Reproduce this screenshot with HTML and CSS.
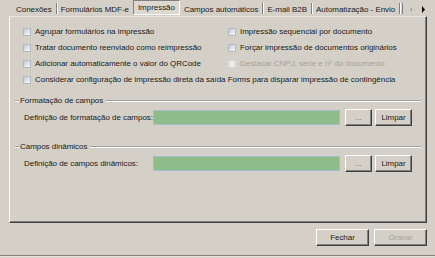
FILE: index.html
```html
<!DOCTYPE html>
<html>
<head>
<meta charset="utf-8">
<link rel="stylesheet" href="styles.css">
</head>
<body>
<div class="window">
  <div class="tabs">
    <span class="tab">Conexões</span><span class="sep"></span>
    <span class="tab">Formulários MDF-e</span>
    <span class="tab active">Impressão</span>
    <span class="tab after">Campos automáticos</span><span class="sep"></span>
    <span class="tab">E-mail B2B</span><span class="sep"></span>
    <span class="tab">Automatização - Envio</span><span class="sep"></span><span class="sep2"></span>
    <span class="scroll">
      <svg width="5" height="7" viewBox="0 0 5 7"><path d="M3 1 L1 3.5 L3 6 Z" fill="#a8a49c"/></svg>
      <svg width="5" height="7" viewBox="0 0 5 7"><path d="M1 0 L4 3.5 L1 7 Z" fill="#000"/></svg>
    </span>
  </div>
  <div class="panel">
    <div class="checks">
      <label class="chk"><span class="box"></span>Agrupar formulários na impressão</label>
      <label class="chk"><span class="box"></span>Impressão sequencial por documento</label>
      <label class="chk"><span class="box"></span>Tratar documento reenviado como reimpressão</label>
      <label class="chk"><span class="box"></span>Forçar impressão de documentos originários</label>
      <label class="chk"><span class="box"></span>Adicionar automaticamente o valor do QRCode</label>
      <label class="chk disabled"><span class="box"></span>Destacar CNPJ, série e nº do documento</label>
      <label class="chk wide"><span class="box"></span>Considerar configuração de impressão direta da saída Forms para disparar impressão de contingência</label>
    </div>
    <div class="group g1">
      <div class="ghead"><span class="tick"></span><span class="gtitle">Formatação de campos</span><span class="gline"></span></div>
      <div class="field">
        <span class="flabel">Definição de formatação de campos:</span>
        <span class="input"></span>
        <span class="btn dots">...</span>
        <span class="btn limpar">Limpar</span>
      </div>
    </div>
    <div class="group g2">
      <div class="ghead"><span class="tick"></span><span class="gtitle">Campos dinâmicos</span><span class="gline"></span></div>
      <div class="field">
        <span class="flabel">Definição de campos dinâmicos:</span>
        <span class="input"></span>
        <span class="btn dots">...</span>
        <span class="btn limpar">Limpar</span>
      </div>
    </div>
  </div>
  <div class="actions">
    <span class="btn big">Fechar</span>
    <span class="btn big disabled">Gravar</span>
  </div>
  <div class="bottomline"></div>
</div>
</body>
</html>
```
FILE: styles.css
```css
html, body {
  margin: 0;
  padding: 0;
  background: #d4d0c8;
}
body {
  width: 435px;
  height: 258px;
  overflow: hidden;
  font-family: "Liberation Sans", Arial, sans-serif;
  font-size: 8px;
  letter-spacing: -0.04px;
  color: #1a1a1a;
}
.window {
  display: flex;
  flex-direction: column;
  height: 258px;
}
.tabs {
  display: flex;
  height: 16px;
  padding-left: 13px;
  align-items: stretch;
  overflow: hidden;
}
.tab {
  display: flex;
  align-items: center;
  padding: 2px 4px 0 3px;
  white-space: nowrap;
  flex: none;
}
.tab.active {
  padding: 0 4px;
  margin-left: 0;
  height: 15px;
  box-sizing: border-box;
  border: 1px solid;
  border-color: #808080 #ffffff #ffffff #808080;
  background: #dcd8d0;
}
.tab.after {
  padding-left: 4px;
}
.sep {
  flex: none;
  width: 1px;
  margin: 3px 0 2px;
  background: #808080;
  border-right: 1px solid #ffffff;
}
.sep2 {
  flex: none;
  width: 1px;
  margin: 3px 0 2px 1px;
  background: #808080;
}
.scroll {
  flex: none;
  display: flex;
  align-items: center;
  gap: 7px;
  padding: 2px 0 0 6px;
}
.panel {
  margin-left: 9px;
  width: 418px;
  height: 207px;
  box-sizing: border-box;
  border-left: 1px solid #ffffff;
  border-top: 1px solid #e8e6e0;
  border-right: 1px solid #404040;
  border-bottom: 1px solid #404040;
  box-shadow: inset -1px -1px 0 #808080;
  display: flex;
  flex-direction: column;
}
.checks {
  display: grid;
  grid-template-columns: 205px 1fr;
  grid-auto-rows: 16px;
  padding: 6px 0 0 13px;
}
.chk {
  display: flex;
  align-items: center;
  white-space: nowrap;
}
.chk.wide {
  grid-column: 1 / 3;
  margin-top: 1px;
}
.box {
  flex: none;
  width: 8px;
  height: 8px;
  box-sizing: border-box;
  border: 1px solid #b4b8c2;
  background: linear-gradient(135deg, #c4c8d2 0%, #e4e6ea 60%, #f6f6f6 100%);
  margin: 1px 4px 0 0;
}
.chk.disabled {
  color: #a6a29a;
}
.chk.disabled .box {
  border-color: #d6d4d0;
  background: #ebe9e5;
}
.group {
  margin: 0 5px;
}
.g1 {
  margin-top: 8px;
}
.g2 {
  margin-top: 15px;
}
.ghead {
  display: flex;
  align-items: center;
  height: 10px;
}
.tick {
  width: 4px;
  height: 1px;
  background: #a0a0a0;
  border-bottom: 1px solid #fff;
  margin-top: 1px;
}
.gtitle {
  padding: 0 3px 0 1px;
  white-space: nowrap;
}
.gline {
  flex: 1;
  height: 1px;
  background: #a0a0a0;
  border-bottom: 1px solid #fff;
  margin-top: 1px;
}
.field {
  display: flex;
  align-items: center;
  height: 17px;
  margin-top: 4px;
  padding-left: 9px;
}
.flabel {
  flex: none;
  width: 129px;
  white-space: nowrap;
  overflow: hidden;
}
.input {
  flex: none;
  width: 187px;
  height: 15px;
  box-sizing: border-box;
  border: 1px solid #a4bccf;
  background: #8fbd8a;
  margin-right: 5px;
}
.btn {
  flex: none;
  display: flex;
  align-items: center;
  justify-content: center;
  height: 17px;
  box-sizing: border-box;
  background: #d4d0c8;
  border: 1px solid;
  border-color: #ffffff #404040 #404040 #ffffff;
  box-shadow: inset -1px -1px 0 #808080;
}
.btn.dots {
  width: 27px;
  margin-right: 3px;
  color: #6a6a6a;
}
.btn.limpar {
  width: 37px;
}
.actions {
  display: flex;
  justify-content: flex-end;
  gap: 5px;
  padding-right: 8px;
  margin-top: 6px;
}
.btn.big {
  width: 53px;
}
.btn.disabled {
  color: #a6a29a;
}
.bottomline {
  margin-top: 9px;
  height: 1px;
  background: #808080;
  border-bottom: 1px solid #e6e3dd;
}
```
